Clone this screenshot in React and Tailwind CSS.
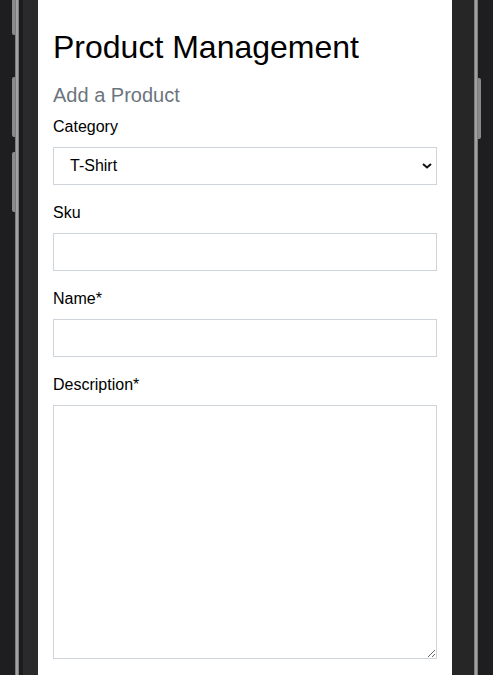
import React from "react";

function Field({ label, children }) {
  return (
    <div className="mb-4">
      <label className="block mb-2 text-[16px] leading-[24px] text-black">{label}</label>
      {children}
    </div>
  );
}

export default function App() {
  const font = { fontFamily: '"Liberation Sans", Arial, Helvetica, sans-serif' };
  return (
    <div className="flex h-[675px] w-[493px] overflow-hidden bg-[#1e1e20]" style={font}>
      {/* left frame */}
      <div className="w-[12px] shrink-0 bg-[#1e1e20]" />
      <div className="w-[3px] shrink-0 flex flex-col">
        <div className="h-[35px] rounded-bl-[2px] bg-[#8a8a8a]" />
        <div className="mt-[42px] h-[60px] rounded-l-[2px] bg-[#8a8a8a]" />
        <div className="mt-[15px] h-[60px] rounded-l-[2px] bg-[#8a8a8a]" />
      </div>
      <div className="w-[4px] shrink-0 bg-[#a2a2a2] border-x border-[#7c7c7c]" />
      <div className="w-[4px] shrink-0 bg-[#1c1c1e]" />
      <div className="w-[15px] shrink-0 bg-[#2a2a2a]" />

      {/* content */}
      <div className="w-[414px] shrink-0 bg-white px-[15px] pt-[28px]">
        <h1 className="text-[32px] leading-[38px] text-black mb-[17px]">Product Management</h1>
        <h5 className="text-[20px] leading-[24px] text-[#6c757d] mb-2">Add a Product</h5>
        <Field label="Category">
          <div className="relative">
            <select
              className="block w-full h-[38px] appearance-none border border-[#ced4da] bg-white pl-[16px] pr-8 text-[16px] text-black outline-none"
              style={font}
              defaultValue="T-Shirt"
            >
              <option>T-Shirt</option>
            </select>
            <svg
              className="pointer-events-none absolute right-[5px] top-[16px]"
              width="10"
              height="6"
              viewBox="0 0 10 6"
            >
              <path d="M1 1 L5 4.5 L9 1" fill="none" stroke="#111" strokeWidth="2" />
            </svg>
          </div>
        </Field>
        <Field label="Sku">
          <input className="block w-full h-[38px] border border-[#ced4da] bg-white px-3 text-[16px] outline-none" />
        </Field>
        <Field label="Name*">
          <input className="block w-full h-[38px] border border-[#ced4da] bg-white px-3 text-[16px] outline-none" />
        </Field>
        <div>
          <label className="block mb-2 text-[16px] leading-[24px] text-black">Description*</label>
          <textarea className="block w-full h-[254px] border border-[#ced4da] bg-white px-3 text-[16px] outline-none resize-y" />
        </div>
      </div>

      {/* right frame */}
      <div className="w-[22px] shrink-0 bg-[#262626]" />
      <div className="w-[4px] shrink-0 bg-[#a2a2a2] border-x border-[#7c7c7c]" />
      <div className="w-[3px] shrink-0 flex flex-col">
        <div className="mt-[78px] h-[61px] rounded-r-[2px] bg-[#8a8a8a]" />
      </div>
      <div className="flex-1 bg-[#1e1e20]" />
    </div>
  );
}
